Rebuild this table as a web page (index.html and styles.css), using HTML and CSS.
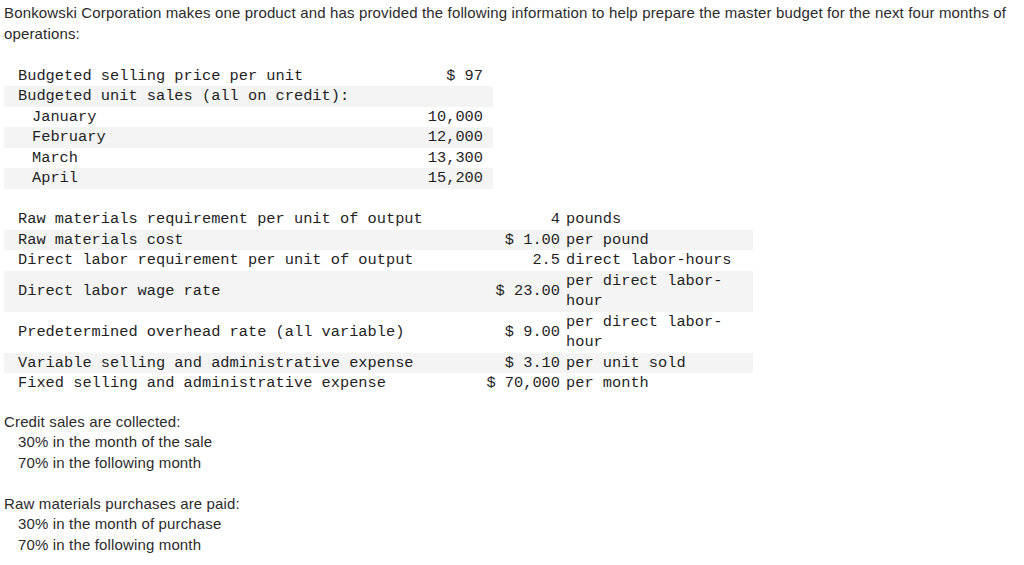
FILE: index.html
```html
<!DOCTYPE html>
<html>
<head>
<meta charset="utf-8">
<link rel="stylesheet" href="styles.css">
</head>
<body>
<p class="intro">Bonkowski Corporation makes one product and has provided the following information to help prepare the master budget for the next four months of operations:</p>

<table class="data t1">
  <colgroup><col class="c-label"><col class="c-num"></colgroup>
  <tr><td class="label">Budgeted selling price per unit</td><td class="num">$ 97</td></tr>
  <tr class="alt"><td class="label">Budgeted unit sales (all on credit):</td><td class="num"></td></tr>
  <tr><td class="label indent">January</td><td class="num">10,000</td></tr>
  <tr class="alt"><td class="label indent">February</td><td class="num">12,000</td></tr>
  <tr><td class="label indent">March</td><td class="num">13,300</td></tr>
  <tr class="alt"><td class="label indent">April</td><td class="num">15,200</td></tr>
</table>

<table class="data t2">
  <colgroup><col class="c-label"><col class="c-num"><col class="c-unit"></colgroup>
  <tr><td class="label">Raw materials requirement per unit of output</td><td class="num">4</td><td class="unit">pounds</td></tr>
  <tr class="alt"><td class="label">Raw materials cost</td><td class="num">$ 1.00</td><td class="unit">per pound</td></tr>
  <tr><td class="label">Direct labor requirement per unit of output</td><td class="num">2.5</td><td class="unit">direct labor-hours</td></tr>
  <tr class="alt"><td class="label">Direct labor wage rate</td><td class="num">$ 23.00</td><td class="unit">per direct labor-hour</td></tr>
  <tr><td class="label">Predetermined overhead rate (all variable)</td><td class="num">$ 9.00</td><td class="unit">per direct labor-hour</td></tr>
  <tr class="alt"><td class="label">Variable selling and administrative expense</td><td class="num">$ 3.10</td><td class="unit">per unit sold</td></tr>
  <tr><td class="label">Fixed selling and administrative expense</td><td class="num">$ 70,000</td><td class="unit">per month</td></tr>
</table>

<div class="terms">
  <p class="term-title">Credit sales are collected:</p>
  <p class="term-item">30% in the month of the sale</p>
  <p class="term-item">70% in the following month</p>
</div>

<div class="terms">
  <p class="term-title">Raw materials purchases are paid:</p>
  <p class="term-item">30% in the month of purchase</p>
  <p class="term-item">70% in the following month</p>
</div>
</body>
</html>
```

FILE: styles.css
```css
html, body {
  margin: 0;
  padding: 0;
  background: #ffffff;
}

body {
  padding: 2px 4px 0 4px;
  font-family: "Liberation Sans", Arial, sans-serif;
  font-size: 15px;
  letter-spacing: 0.15px;
  color: #2b2b2b;
}

.intro {
  margin: 0;
  line-height: 21px;
  width: 1012px;
}

.data {
  border-collapse: collapse;
  border-spacing: 0;
  table-layout: fixed;
  font-family: "Liberation Mono", "Courier New", monospace;
  font-size: 15.33px;
  letter-spacing: 0;
  color: #1f1f1f;
}

.data td {
  padding: 0;
  line-height: 20.5px;
  vertical-align: middle;
  white-space: normal;
}

.data tr.alt td {
  background: #f4f4f4;
}

.t1 {
  width: 489px;
  margin-top: 21.5px;
}

.t1 .c-label { width: 389px; }
.t1 .c-num { width: 100px; }

.t1 td.num {
  text-align: right;
  padding-right: 10px;
}

.t2 {
  width: 749px;
  margin-top: 20.5px;
}

.t2 .c-label { width: 482px; }
.t2 .c-num { width: 74px; }
.t2 .c-unit { width: 193px; }

.t2 td.num {
  text-align: right;
  white-space: nowrap;
}

.t2 td.unit {
  padding-left: 6px;
  padding-right: 1px;
}

td.label {
  padding-left: 14px;
  white-space: nowrap;
}

td.label.indent {
  padding-left: 28px;
}

.terms {
  margin-top: 18px;
}

.terms + .terms {
  margin-top: 20.5px;
}

.terms p {
  margin: 0;
  line-height: 20.5px;
}

.term-item {
  padding-left: 14px;
}
```
